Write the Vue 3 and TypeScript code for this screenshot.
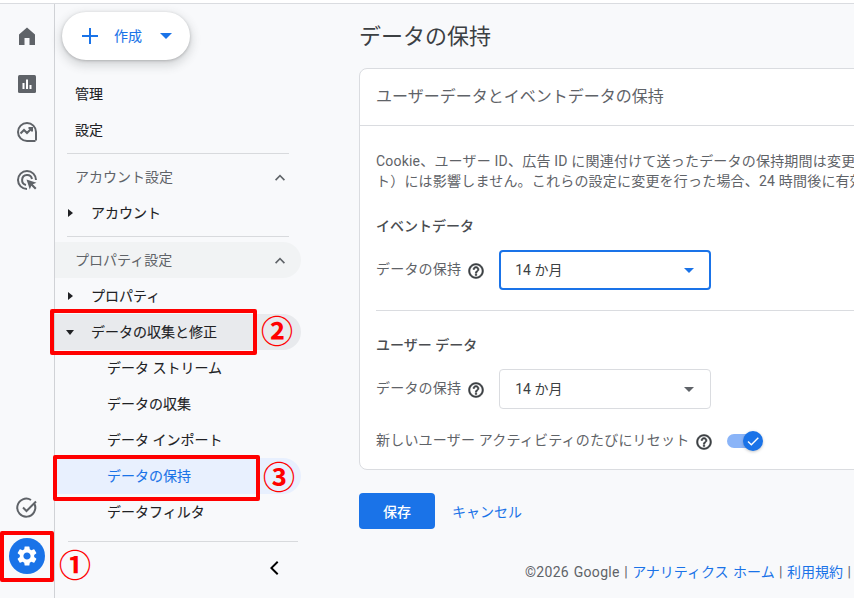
<script setup lang="ts">
// 左メニューの1行分
interface NavRow {
  label: string
  kind: 'top' | 'group' | 'parent' | 'child' | 'line'
  arrow?: 'right' | 'down'
  cls?: string
}

const navRows: NavRow[] = [
  { label: '管理', kind: 'top' },
  { label: '設定', kind: 'top' },
  { label: '', kind: 'line' },
  { label: 'アカウント設定', kind: 'group' },
  { label: 'アカウント', kind: 'parent', arrow: 'right' },
  { label: '', kind: 'line' },
  { label: 'プロパティ設定', kind: 'group', cls: 'hovered' },
  { label: 'プロパティ', kind: 'parent', arrow: 'right' },
  { label: 'データの収集と修正', kind: 'parent', arrow: 'down', cls: 'opened' },
  { label: 'データ ストリーム', kind: 'child' },
  { label: 'データの収集', kind: 'child' },
  { label: 'データ インポート', kind: 'child' },
  { label: 'データの保持', kind: 'child', cls: 'current' },
  { label: 'データフィルタ', kind: 'child' }
]

const helpPath =
  'M11 18h2v-2h-2v2zm1-16C6.480 2 2 6.480 2 12s4.480 10 10 10 10-4.480 10-10S17.520 2 12 2zm0 18c-4.410 0-8-3.590-8-8s3.590-8 8-8 8 3.590 8 8-3.590 8-8 8zm0-14c-2.210 0-4 1.790-4 4h2c0-1.100.9-2 2-2s2 .9 2 2c0 2-3 1.750-3 5h2c0-2.250 3-2.500 3-5 0-2.210-1.790-4-4-4z'
</script>

<template>
  <div class="page">
    <div class="topLine"></div>
    <div class="shell">
      <aside class="rail">
        <div class="railGroup">
          <div class="railIcon">
            <svg viewBox="0 0 24 24" width="24" height="24"><path d="M4 21V10.500L12 3.500l8 7V21h-5.500v-7h-5v7z" fill="#5f6368" /></svg>
          </div>
          <div class="railIcon">
            <svg viewBox="0 0 24 24" width="24" height="24">
              <rect x="3" y="3" width="18" height="18" rx="1.500" fill="#5f6368" />
              <path d="M7.500 11h2v6h-2zM11 7.500h2V17h-2zM14.500 13h2v4h-2z" fill="#fff" />
            </svg>
          </div>
          <div class="railIcon">
            <svg viewBox="0 0 24 24" width="24" height="24" fill="none" stroke="#5f6368" stroke-width="2">
              <path d="M21 20.500V12a9 9 0 1 0-9 9h8.500" />
              <path d="M5.500 13.500l3.500-3.500 3 3 4.500-4.500M13.500 8h3.500v3.500" />
            </svg>
          </div>
          <div class="railIcon">
            <svg viewBox="0 0 24 24" width="24" height="24" fill="none" stroke="#5f6368" stroke-width="2">
              <path d="M12 3a9 9 0 1 0 0 18" />
              <path d="M12 3a9 9 0 0 1 9 9" />
              <path d="M11 16.900A5 5 0 1 1 17 11" />
              <path d="M11.500 11.500l10 3.300-3.700 1.500 3.700 3.700-1.500 1.500-3.700-3.700-1.500 3.700z" fill="#5f6368" stroke="none" />
            </svg>
          </div>
        </div>
        <div class="railGroup">
          <div class="railIcon">
            <svg viewBox="0 0 24 24" width="24" height="24" fill="none" stroke="#5f6368" stroke-width="2">
              <path d="M19.500 8A9 9 0 1 1 16 4" />
              <path d="M8 11.500l3.500 3.500L21 5.500" />
            </svg>
          </div>
          <div class="railIcon">
            <span class="gearDisc">
              <svg viewBox="0 0 24 24" width="24" height="24"><path d="M19.140 12.940c.04-.3.06-.61.06-.94 0-.32-.02-.64-.07-.94l2.030-1.580a.49.49 0 0 0 .12-.61l-1.920-3.320a.488.488 0 0 0-.59-.22l-2.390.96c-.5-.38-1.030-.7-1.620-.94l-.36-2.540a.484.484 0 0 0-.48-.41h-3.840c-.24 0-.43.17-.47.41l-.36 2.540c-.59.24-1.130.57-1.620.94l-2.390-.96c-.22-.08-.47 0-.59.22L2.740 8.870c-.12.21-.08.47.12.61l2.030 1.580c-.05.3-.09.63-.09.94s.02.64.07.94l-2.030 1.580a.49.49 0 0 0-.12.61l1.920 3.320c.12.22.37.29.59.22l2.390-.96c.5.38 1.030.7 1.620.94l.36 2.540c.05.24.24.41.48.41h3.840c.24 0 .44-.17.47-.41l.36-2.540c.59-.24 1.130-.56 1.620-.94l2.390.96c.22.08.47 0 .59-.22l1.920-3.320c.12-.22.07-.47-.12-.61l-2.010-1.580zM12 15.600c-1.980 0-3.600-1.620-3.600-3.600s1.620-3.600 3.600-3.600 3.600 1.620 3.600 3.600-1.620 3.600-3.600 3.600z" fill="#fff" /></svg>
            </span>
          </div>
        </div>
      </aside>

      <nav class="side">
        <button class="createBtn">
          <svg viewBox="0 0 24 24" width="24" height="24"><path d="M11 4h2v7h7v2h-7v7h-2v-7H4v-2h7z" fill="#1a73e8" /></svg>
          <span class="createText">作成</span>
          <span class="createArrow"></span>
        </button>

        <div class="navList">
          <template v-for="(row, i) in navRows" :key="i">
            <div v-if="row.kind === 'line'" class="navLine"></div>
            <div v-else class="navRow" :class="[row.kind, row.cls]">
              <span v-if="row.arrow" class="tri" :class="row.arrow"></span>
              <span>{{ row.label }}</span>
              <svg v-if="row.kind === 'group'" class="chev" viewBox="0 0 24 24" width="20" height="20"><path d="M6 15l6-6 6 6-1.400 1.400L12 11.800l-4.600 4.600z" fill="#5f6368" /></svg>
            </div>
          </template>
        </div>

        <div class="sideFoot">
          <svg viewBox="0 0 24 24" width="24" height="24"><path d="M15.400 6.400L14 5l-7 7 7 7 1.400-1.400L9.800 12z" fill="#000" /></svg>
        </div>
      </nav>

      <main class="main">
        <h1 class="title">データの保持</h1>
        <section class="card">
          <div class="cardHead">ユーザーデータとイベントデータの保持</div>
          <div class="cardBody">
            <p class="desc">Cookie、ユーザー ID、広告 ID に関連付けて送ったデータの保持期間は変更できます。この設定は標準の集計レポー<br />ト）には影響しません。これらの設定に変更を行った場合、24 時間後に有効になります。</p>

            <h2 class="subHead">イベントデータ</h2>
            <div class="field">
              <span class="fieldLabel">データの保持</span>
              <svg class="help" viewBox="0 0 24 24" width="18" height="18"><path :d="helpPath" fill="#3c4043" stroke="#3c4043" stroke-width="0.7" /></svg>
              <div class="select focused">
                <span class="selValue">14 か月</span>
                <span class="selArrow"></span>
              </div>
            </div>

            <div class="bodyLine"></div>

            <h2 class="subHead userHead">ユーザー データ</h2>
            <div class="field">
              <span class="fieldLabel">データの保持</span>
              <svg class="help" viewBox="0 0 24 24" width="18" height="18"><path :d="helpPath" fill="#3c4043" stroke="#3c4043" stroke-width="0.7" /></svg>
              <div class="select">
                <span class="selValue">14 か月</span>
                <span class="selArrow"></span>
              </div>
            </div>
            <div class="resetRow">
              <span class="fieldLabel">新しいユーザー アクティビティのたびにリセット</span>
              <svg class="help" viewBox="0 0 24 24" width="18" height="18"><path :d="helpPath" fill="#3c4043" stroke="#3c4043" stroke-width="0.7" /></svg>
              <span class="toggle">
                <span class="knob">
                  <svg viewBox="0 0 24 24" width="16" height="16"><path d="M9.500 16.200L5.300 12l-1.500 1.500 5.700 5.700L20.700 8l-1.500-1.500z" fill="#fff" /></svg>
                </span>
              </span>
            </div>
          </div>
        </section>

        <div class="actions">
          <button class="saveBtn">保存</button>
          <span class="cancel">キャンセル</span>
        </div>

        <footer class="foot"><span class="copy">©2026 Google</span> | <span class="link">アナリティクス ホーム</span> | <span class="link">利用規約</span> | <span class="link">プライバシー ポリシー</span></footer>
      </main>
    </div>

    <!-- 手順の注釈（スクリーンショットの上に重ねる） -->
    <div class="mark markOne"></div>
    <div class="mark markTwo"></div>
    <div class="mark markThree"></div>
    <span class="num numOne">①</span>
    <span class="num numTwo">②</span>
    <span class="num numThree">③</span>
  </div>
</template>

<style>
html,
body {
  margin: 0;
  background: #fff;
}
</style>

<style scoped>
.page {
  position: relative;
  width: 854px;
  height: 598px;
  overflow: hidden;
  background: #f8f9fb;
  font-family: Roboto, "Noto Sans CJK JP", sans-serif;
  color: #202124;
}
.topLine {
  height: 3px;
  background: #fff;
  border-bottom: 1px solid #dadce0;
}
.shell {
  display: flex;
  height: 594px;
}
.rail {
  flex: none;
  display: flex;
  flex-direction: column;
  justify-content: space-between;
  width: 55px;
  padding: 8px 0 18px;
  box-sizing: border-box;
  border-right: 1px solid #d0d2d6;
}
.railIcon {
  display: flex;
  align-items: center;
  justify-content: center;
  width: 54px;
  height: 48px;
}
.gearDisc {
  display: flex;
  align-items: center;
  justify-content: center;
  width: 36px;
  height: 36px;
  border-radius: 50%;
  background: #1a73e8;
}
.side {
  flex: none;
  display: flex;
  flex-direction: column;
  width: 246px;
}
.createBtn {
  display: flex;
  align-items: center;
  width: 128px;
  height: 48px;
  margin: 8px 0 0 7px;
  padding: 0 0 0 16px;
  border: none;
  border-radius: 24px;
  background: #fff;
  box-shadow: 0 1px 3px rgba(60, 64, 67, 0.3), 0 4px 8px 3px rgba(60, 64, 67, 0.15);
  font-family: inherit;
}
.createText {
  margin: 0 0 3px 12px;
  font-size: 14px;
  color: #1a73e8;
  -webkit-text-stroke: 0.1px currentColor;
}
.createArrow {
  margin: 0 0 1px 18px;
  border-left: 6px solid transparent;
  border-right: 6px solid transparent;
  border-top: 6px solid #1a73e8;
}
.navList {
  margin-top: 16px;
}
.navRow {
  position: relative;
  display: flex;
  align-items: center;
  height: 36px;
  padding-bottom: 2px;
  box-sizing: border-box;
  font-size: 14px;
  border-radius: 0 18px 18px 0;
  -webkit-text-stroke: 0.1px currentColor;
}
.top {
  padding-left: 20px;
}
.group {
  padding-left: 20px;
  color: #5f6368;
  -webkit-text-stroke: 0;
}
.parent {
  padding-left: 36px;
}
.child {
  padding-left: 52px;
}
.hovered {
  background: #f1f3f4;
}
.opened {
  background: #e8eaed;
}
.current {
  background: #e8f0fe;
  color: #1a73e8;
}
.navLine {
  height: 1px;
  margin: 5px 12px;
  background: #d8dadd;
}
.tri {
  position: absolute;
  top: 14px;
}
.tri.right {
  left: 13px;
  border-top: 4px solid transparent;
  border-bottom: 4px solid transparent;
  border-left: 5px solid #202124;
}
.tri.down {
  left: 11px;
  top: 16px;
  border-left: 4px solid transparent;
  border-right: 4px solid transparent;
  border-top: 5px solid #202124;
}
.chev {
  position: absolute;
  right: 11px;
  top: 8px;
}
.sideFoot {
  display: flex;
  justify-content: flex-end;
  width: 230px;
  margin: 11px 0 0 13px;
  padding: 14px 11px 0 0;
  box-sizing: border-box;
  border-top: 1px solid #d8dadd;
}
.main {
  flex: none;
  width: 760px;
  padding-left: 58px;
  box-sizing: border-box;
}
.title {
  height: 32px;
  margin: 17px 0 0;
  font-size: 22px;
  line-height: 32px;
  font-weight: 400;
  color: #3c4043;
}
.card {
  height: 402px;
  margin-top: 15px;
  box-sizing: border-box;
  border: 1px solid #dadce0;
  border-radius: 8px;
  background: #fff;
}
.cardHead {
  height: 57px;
  padding: 0 16px;
  box-sizing: border-box;
  border-bottom: 1px solid #dadce0;
  font-size: 16px;
  line-height: 55px;
  color: #5f6368;
}
.cardBody {
  padding: 25px 0 0 16px;
}
.desc {
  width: 640px;
  margin: 0;
  font-size: 14px;
  line-height: 20px;
  letter-spacing: 0.2px;
  white-space: nowrap;
  color: #5f6368;
}
.subHead {
  height: 20px;
  margin: 25px 0 0;
  font-size: 14px;
  line-height: 20px;
  font-weight: 500;
  color: #4a4d51;
}
.userHead {
  margin: 24px 0 1px;
}
.field {
  display: flex;
  align-items: center;
  margin-top: 14px;
}
.fieldLabel {
  margin-bottom: 4px;
  font-size: 14px;
  letter-spacing: 0.2px;
  color: #5f6368;
}
.help {
  flex: none;
  margin: 2px 0 0 6px;
}
.select {
  display: flex;
  align-items: center;
  justify-content: space-between;
  width: 212px;
  height: 40px;
  margin-left: 14px;
  padding: 0 16px 0 15px;
  box-sizing: border-box;
  border: 1px solid #dadce0;
  border-radius: 4px;
  font-size: 14px;
  color: #3c4043;
}
.select.focused {
  padding: 0 15px 0 14px;
  border: 2px solid #1a73e8;
}
.selValue {
  margin-bottom: 3px;
}
.selArrow {
  border-left: 5px solid transparent;
  border-right: 5px solid transparent;
  border-top: 5px solid #5f6368;
}
.focused .selArrow {
  border-top-color: #1a73e8;
}
.bodyLine {
  height: 1px;
  margin-top: 20px;
  background: #dadce0;
}
.resetRow {
  display: flex;
  align-items: center;
  height: 40px;
  margin-top: 12px;
}
.toggle {
  position: relative;
  width: 28px;
  height: 14px;
  margin-left: 14px;
  border-radius: 7px;
  background: #8ab4f8;
}
.knob {
  position: absolute;
  top: -3px;
  right: -8px;
  display: flex;
  align-items: center;
  justify-content: center;
  width: 20px;
  height: 20px;
  border-radius: 50%;
  background: #1a73e8;
  box-shadow: 0 1px 3px rgba(60, 64, 67, 0.3);
}
.actions {
  display: flex;
  align-items: center;
  margin-top: 23px;
}
.saveBtn {
  width: 76px;
  height: 36px;
  border: none;
  border-radius: 4px;
  background: #1a73e8;
  color: #fff;
  font-family: inherit;
  font-size: 14px;
  font-weight: 500;
}
.cancel {
  margin-left: 17px;
  font-size: 14px;
  color: #1a73e8;
}
.foot {
  margin: 33px 0 0 166px;
  font-size: 14px;
  line-height: 20px;
  word-spacing: 1px;
  white-space: nowrap;
  color: #5f6368;
}
.copy {
  letter-spacing: 0.3px;
}
.link {
  color: #1a73e8;
}
.mark {
  position: absolute;
  box-sizing: border-box;
  border: 4px solid #f00;
  border-radius: 2px;
}
.markOne {
  left: 0;
  top: 531px;
  width: 54px;
  height: 51px;
}
.markTwo {
  left: 50px;
  top: 309px;
  width: 207px;
  height: 46px;
}
.markThree {
  left: 53px;
  top: 455px;
  width: 207px;
  height: 46px;
}
.num {
  position: absolute;
  font-family: "Noto Sans CJK JP", sans-serif;
  font-size: 32px;
  line-height: 36px;
  font-weight: 700;
  color: #f00;
}
.numOne {
  left: 59px;
  top: 545px;
}
.numTwo {
  left: 261px;
  top: 311px;
}
.numThree {
  left: 263px;
  top: 457px;
}
</style>
